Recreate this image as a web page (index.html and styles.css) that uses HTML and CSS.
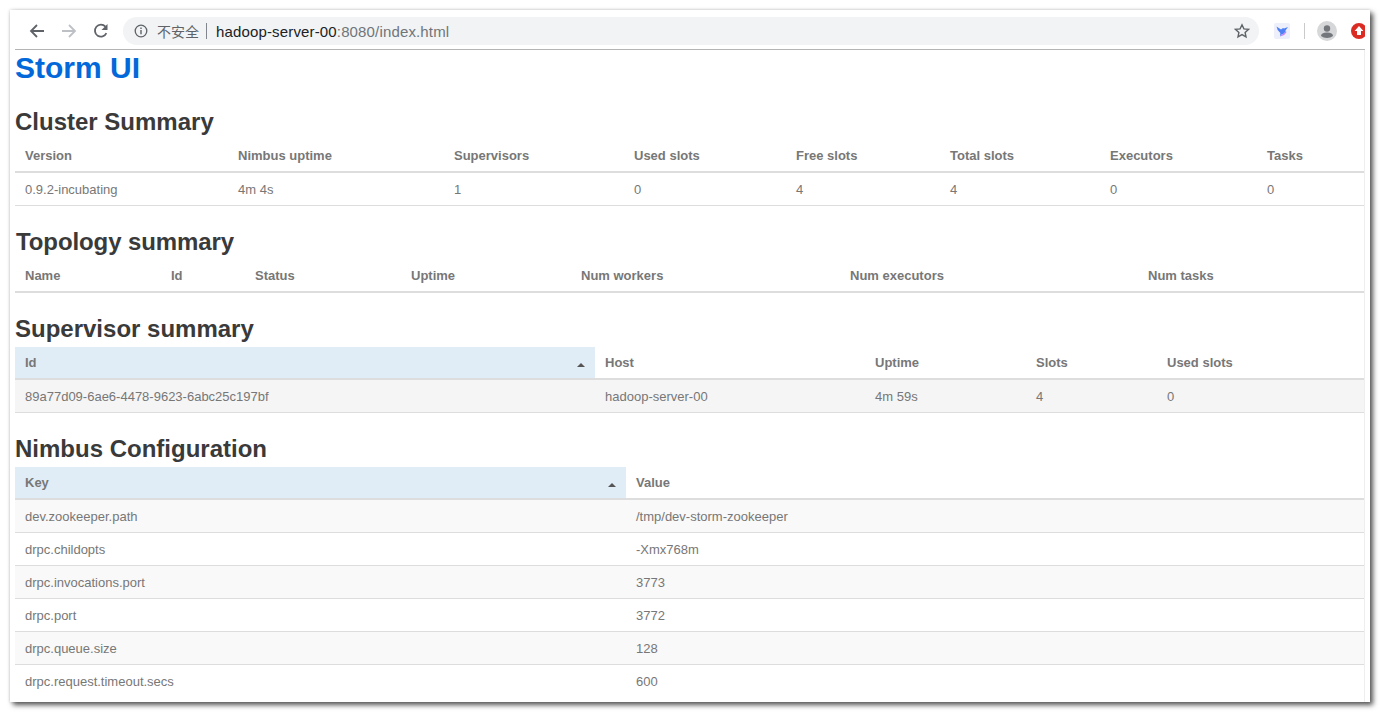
FILE: index.html
```html
<!DOCTYPE html>
<html lang="en">
<head>
<meta charset="utf-8">
<title>Storm UI</title>
<link rel="stylesheet" href="styles.css">
</head>
<body>
<div class="window">
  <header class="toolbar">
    <svg class="nav" viewBox="0 0 16 16"><path d="M15 8H2.5M8 2 2 8l6 6" fill="none" stroke="#5f6368" stroke-width="1.8"/></svg>
    <svg class="nav" viewBox="0 0 16 16"><path d="M1 8h12.5M8 2l6 6-6 6" fill="none" stroke="#bdc1c6" stroke-width="1.8"/></svg>
    <svg class="nav" viewBox="0 0 16 16"><path d="M13.4 10.2A6 6 0 1 1 12.4 3.6" fill="none" stroke="#5f6368" stroke-width="1.8"/><path d="M14.5 1v6h-6z" fill="#5f6368"/></svg>
    <div class="omnibox">
      <svg class="info" viewBox="0 0 14 14"><circle cx="7" cy="7" r="5.8" fill="none" stroke="#5f6368" stroke-width="1.3"/><path d="M7 6v4.2M7 3.6v1.4" stroke="#5f6368" stroke-width="1.4"/></svg>
      <span class="insecure">不安全</span>
      <span class="sep"></span>
      <span class="url">hadoop-server-00<span class="url-dim">:8080/index.html</span></span>
      <svg class="star" viewBox="0 0 16 16"><path d="m8 1.8 1.9 4.1 4.5.5-3.3 3 .9 4.4L8 11.6l-4 2.2.9-4.4-3.3-3 4.5-.5z" fill="none" stroke="#5f6368" stroke-width="1.4"/></svg>
    </div>
    <svg class="ext" viewBox="0 0 16 16"><rect width="16" height="16" rx="2" fill="#edf0fb"/><path d="M2.5 3.5 7 6.5l2-1.5 1 .5 4-1.5-2.5 3.5Q11 11 7.5 11.5L6 13.5 6.3 10Q3.2 8 2.5 3.5z" fill="#4f80f5"/><path d="M6 13.5 7.5 11.5Q11 11 11.5 7.5L12.5 9Q11 12.5 6 13.5z" fill="#c984f2"/></svg>
    <span class="tool-sep"></span>
    <svg class="avatar" viewBox="0 0 20 20"><circle cx="10" cy="10" r="10" fill="#d6d7d9"/><circle cx="10" cy="7.5" r="3.2" fill="#73767a"/><path d="M4 15q0-3.6 6-3.6t6 3.6q-2.4 2-6 2t-6-2z" fill="#73767a"/></svg>
    <svg class="addon" viewBox="0 0 14 16"><circle cx="8" cy="8" r="8" fill="#db2c24"/><path d="M8 3 3.6 8H6v4h4V8h2.4z" fill="#fff"/></svg>
  </header>
  <main class="page">
    <h1 class="title">Storm UI</h1>

    <h2 class="heading heading-cluster">Cluster Summary</h2>
    <table class="grid">
      <colgroup><col class="c213"><col class="c216"><col class="c180"><col class="c162"><col class="c154"><col class="c160"><col class="c157"><col></colgroup>
      <thead><tr><th>Version</th><th>Nimbus uptime</th><th>Supervisors</th><th>Used slots</th><th>Free slots</th><th>Total slots</th><th>Executors</th><th>Tasks</th></tr></thead>
      <tbody><tr class="plain"><td>0.9.2-incubating</td><td>4m 4s</td><td>1</td><td>0</td><td>4</td><td>4</td><td>0</td><td>0</td></tr></tbody>
    </table>

    <h2 class="heading heading-topology">Topology summary</h2>
    <table class="grid">
      <colgroup><col class="c146"><col class="c84"><col class="c156"><col class="c170"><col class="c269"><col class="c298"><col></colgroup>
      <thead><tr><th>Name</th><th>Id</th><th>Status</th><th>Uptime</th><th>Num workers</th><th>Num executors</th><th>Num tasks</th></tr></thead>
    </table>

    <h2 class="heading heading-supervisor">Supervisor summary</h2>
    <table class="grid">
      <colgroup><col class="c580"><col class="c270"><col class="c161"><col class="c131"><col></colgroup>
      <thead><tr><th class="sorted">Id</th><th>Host</th><th>Uptime</th><th>Slots</th><th>Used slots</th></tr></thead>
      <tbody><tr class="odd-strong"><td>89a77d09-6ae6-4478-9623-6abc25c197bf</td><td>hadoop-server-00</td><td>4m 59s</td><td>4</td><td>0</td></tr></tbody>
    </table>

    <h2 class="heading heading-nimbus">Nimbus Configuration</h2>
    <table class="grid">
      <colgroup><col class="c611"><col></colgroup>
      <thead><tr><th class="sorted">Key</th><th>Value</th></tr></thead>
      <tbody>
        <tr class="odd"><td>dev.zookeeper.path</td><td>/tmp/dev-storm-zookeeper</td></tr>
        <tr class="plain"><td>drpc.childopts</td><td>-Xmx768m</td></tr>
        <tr class="odd"><td>drpc.invocations.port</td><td>3773</td></tr>
        <tr class="plain"><td>drpc.port</td><td>3772</td></tr>
        <tr class="odd"><td>drpc.queue.size</td><td>128</td></tr>
        <tr class="plain last"><td>drpc.request.timeout.secs</td><td>600</td></tr>
      </tbody>
    </table>
  </main>
</div>
</body>
</html>
```
FILE: styles.css
```css
* { box-sizing: border-box; }
html, body { margin: 0; height: 100%; background: #fff; overflow: hidden; }
body { padding: 10px 11px 11px 10px; font-family: "Liberation Sans", Arial, sans-serif; }
.window {
  height: 692px;
  background: #fff;
  box-shadow: 3px 3px 5px #555, 0 0 3px rgba(0,0,0,.18);
  overflow: hidden;
}
.toolbar {
  height: 40px;
  margin: 0 5px;
  padding: 7px 0 0 14px;
  border-bottom: 1px solid #b4b4b4;
  display: flex;
  align-items: flex-start;
  overflow: hidden;
}
.nav { width: 16px; height: 16px; margin: 6px 16px 0 0; flex: none; }
.omnibox {
  flex: none;
  width: 1136px;
  height: 28px;
  margin-left: -2px;
  border-radius: 14px;
  background: #f1f3f4;
  display: flex;
  align-items: center;
  padding: 0 9px 0 11px;
  margin-right: 15px;
}
.info { width: 14px; height: 14px; flex: none; }
.insecure { margin-left: 9px; font: 14px "Noto Sans CJK SC", sans-serif; color: #5f6368; line-height: 20px; }
.sep { width: 1px; height: 16px; background: #80868b; margin: 0 9px 0 7px; }
.url { font-size: 15px; color: #202124; flex: 1; letter-spacing: .15px; }
.url-dim { color: #70757a; }
.star { width: 16px; height: 16px; flex: none; }
.ext { width: 16px; height: 16px; margin-top: 6px; flex: none; }
.tool-sep { width: 1px; height: 16px; background: #c8cacc; margin: 6px 12px 0 14px; flex: none; }
.avatar { width: 20px; height: 20px; margin-top: 4px; flex: none; }
.addon { width: 14px; height: 16px; margin: 6px 0 0 14px; flex: none; }
.page { margin: 0 5px; border-right: 1px solid #eee; height: 652px; overflow: hidden; }
.title { margin: 0; font-size: 30px; line-height: 36px; font-weight: 700; color: #0368d9; }
.heading { margin: 0 0 4px; font-size: 24px; line-height: 28px; font-weight: 700; color: #3a3a3a; }
.heading-cluster { margin-top: 22px; }
.heading-topology { margin: 22px 0 4px 1px; letter-spacing: -.1px; }
.heading-supervisor { margin-top: 22px; }
.heading-nimbus { margin-top: 22px; }
.grid {
  width: 1349px;
  border-collapse: collapse;
  table-layout: fixed;
  font-size: 13px;
  color: #777;
}
.grid th {
  height: 32px;
  padding: 0 10px;
  text-align: left;
  font-weight: 700;
  border-bottom: 2px solid #ddd;
  color: #777;
}
.grid td {
  height: 33px;
  padding: 1px 10px 0;
  border-bottom: 1px solid #ddd;
}
.sorted { background: #e1edf6; position: relative; }
.sorted::after {
  content: "";
  position: absolute;
  right: 10px;
  top: 16px;
  border: 4px solid transparent;
  border-top: 0;
  border-bottom: 4px solid #555;
}
.odd td { background: #f9f9f9; }
.grid .odd-strong td { background: #f5f5f5; height: 34px; }
.last td { border-bottom: 0; }
.c213 { width: 213px; } .c216 { width: 216px; } .c180 { width: 180px; } .c162 { width: 162px; }
.c154 { width: 154px; } .c160 { width: 160px; } .c157 { width: 157px; }
.c146 { width: 146px; } .c84 { width: 84px; } .c156 { width: 156px; } .c170 { width: 170px; }
.c269 { width: 269px; } .c298 { width: 298px; }
.c580 { width: 580px; } .c270 { width: 270px; } .c161 { width: 161px; } .c131 { width: 131px; }
.c611 { width: 611px; }
```
